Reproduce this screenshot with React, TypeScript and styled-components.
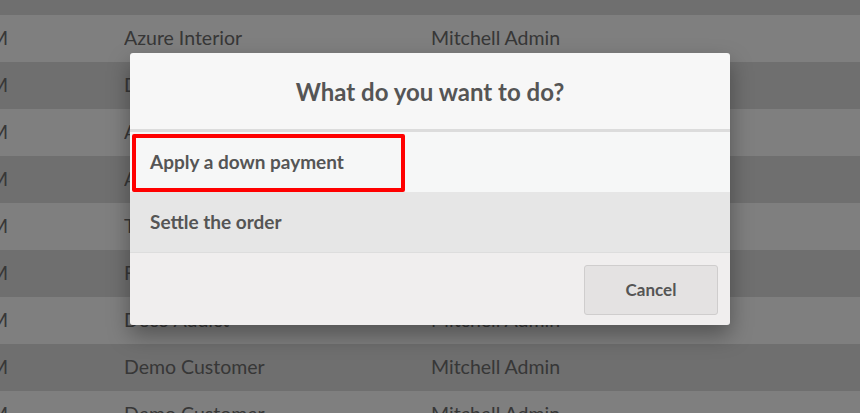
import React from "react";
import styled, { createGlobalStyle } from "styled-components";

const GlobalStyle = createGlobalStyle`
  html, body {
    margin: 0;
    padding: 0;
    width: 860px;
    height: 413px;
    overflow: hidden;
    font-family: Lato, "Noto Sans", sans-serif;
  }
  #root {
    width: 860px;
    height: 413px;
    position: relative;
    overflow: hidden;
  }
`;

const Page = styled.div`
  width: 860px;
  height: 413px;
  position: relative;
  overflow: hidden;
  background: #ffffff;
`;

const Table = styled.div`
  display: flex;
  flex-direction: column;
  margin-top: -32px;
`;

const Row = styled.div<{ $alt: boolean }>`
  display: grid;
  grid-template-columns: 8px 116px 307px 1fr;
  align-items: center;
  height: 47px;
  line-height: 1;
  padding-bottom: 2px;
  box-sizing: border-box;
  background: ${(p) => (p.$alt ? "#dedede" : "#ffffff")};
  color: #6e6e6e;
  font-size: 19.5px;
  white-space: nowrap;
`;

const DateCell = styled.div`
  display: flex;
  justify-content: flex-end;
  overflow: visible;
`;

const Gap = styled.div``;

const Cell = styled.div`
  overflow: hidden;
`;

const Overlay = styled.div`
  position: absolute;
  inset: 0;
  background: rgba(0, 0, 0, 0.5);
  display: flex;
  justify-content: center;
  align-items: flex-start;
  padding-top: 53px;
`;

const Dialog = styled.div`
  width: 600px;
  border-radius: 3px;
  overflow: hidden;
  box-shadow: 0 10px 22px rgba(0, 0, 0, 0.35);
  display: flex;
  flex-direction: column;
  color: #555555;
`;

const Header = styled.div`
  height: 76px;
  background: #f7f7f7;
  border-bottom: 3px solid #dcdcdc;
  display: flex;
  align-items: center;
  justify-content: center;
  font-size: 24px;
  font-weight: 700;
`;

const Option = styled.div<{ $shade: boolean }>`
  position: relative;
  height: 60px;
  display: flex;
  align-items: center;
  padding-left: 20px;
  padding-bottom: 1px;
  box-sizing: border-box;
  font-size: 19px;
  font-weight: 700;
  background: ${(p) => (p.$shade ? "#e6e6e6" : "#f6f7f7")};
`;

const Highlight = styled.div`
  position: absolute;
  left: 2px;
  top: 2px;
  width: 273px;
  height: 58px;
  box-sizing: border-box;
  border: 4px solid #ff0000;
  border-radius: 2px;
  pointer-events: none;
`;

const Footer = styled.div`
  background: #f0eeee;
  border-top: 1px solid #dddddd;
  display: flex;
  justify-content: flex-end;
  padding: 12px 12px 10px;
`;

const CancelButton = styled.button`
  width: 134px;
  height: 50px;
  box-sizing: border-box;
  border: 1px solid #cfcdcd;
  border-radius: 3px;
  background: #e4e2e2;
  color: #555555;
  font-family: Lato, "Noto Sans", sans-serif;
  font-size: 17px;
  font-weight: 700;
  padding: 0 0 1px;
  cursor: pointer;
`;

const rows = [
  { date: "AM", name: "", user: "" },
  { date: "AM", name: "Azure Interior", user: "Mitchell Admin" },
  { date: "AM", name: "Deco Addict", user: "Mitchell Admin" },
  { date: "AM", name: "Azure Interior", user: "Mitchell Admin" },
  { date: "AM", name: "Azure Interior", user: "Mitchell Admin" },
  { date: "AM", name: "The Jackson Group", user: "Mitchell Admin" },
  { date: "AM", name: "Four Corners", user: "Mitchell Admin" },
  { date: "AM", name: "Deco Addict", user: "Mitchell Admin" },
  { date: "AM", name: "Demo Customer", user: "Mitchell Admin" },
  { date: "AM", name: "Demo Customer", user: "Mitchell Admin" },
];

export default function App() {
  return (
    <>
      <GlobalStyle />
      <Page>
        <Table>
          {rows.map((r, i) => (
            <Row key={i} $alt={i % 2 === 0}>
              <DateCell>{r.date}</DateCell>
              <Gap />
              <Cell>{r.name}</Cell>
              <Cell>{r.user}</Cell>
            </Row>
          ))}
        </Table>
        <Overlay>
          <Dialog>
            <Header>What do you want to do?</Header>
            <Option $shade={false}>
              Apply a down payment
              <Highlight />
            </Option>
            <Option $shade={true}>Settle the order</Option>
            <Footer>
              <CancelButton>Cancel</CancelButton>
            </Footer>
          </Dialog>
        </Overlay>
      </Page>
    </>
  );
}
